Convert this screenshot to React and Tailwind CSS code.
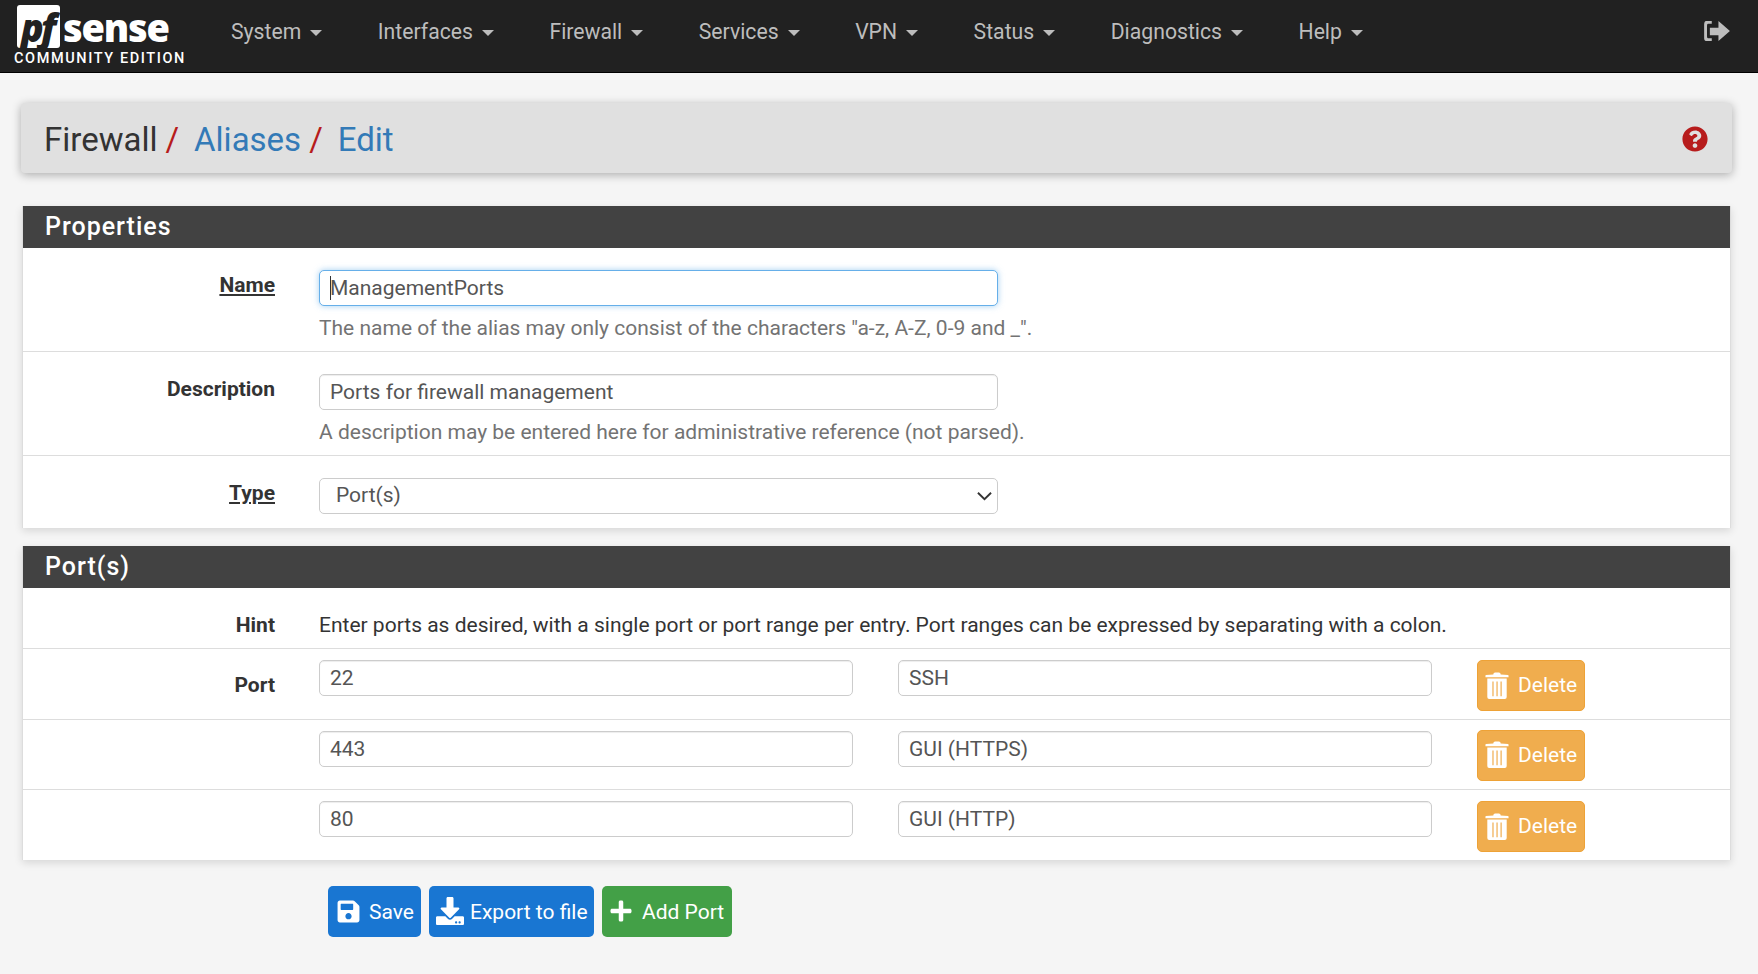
import React from 'react';
import { FaSave, FaDownload, FaPlus, FaQuestionCircle } from 'react-icons/fa';

const menus = ['System', 'Interfaces', 'Firewall', 'Services', 'VPN', 'Status', 'Diagnostics', 'Help'];

const ports = [
  { port: '22', desc: 'SSH', label: 'Port', btnGap: 'pt-[11px]', row: 'h-[70.500px] border-b border-[#ddd]' },
  { port: '443', desc: 'GUI (HTTPS)', label: '', btnGap: 'pt-[10px]', row: 'h-[70.500px] border-b border-[#ddd]' },
  { port: '80', desc: 'GUI (HTTP)', label: '', btnGap: 'pt-[11px]', row: 'h-[69.500px]' },
];

const TrashIcon = () => (
  <svg viewBox="0 0 26 30" className="w-[24px] h-[28px] shrink-0" fill="#fff">
    <path d="M9 2.500 Q9 0.500 11 0.500 L15 0.500 Q17 0.500 17 2.500 L25 3 Q25.500 3 25.500 3.500 L25.500 5.500 L0.500 5.500 L0.500 3.500 Q0.500 3 1 3 Z" />
    <path fillRule="evenodd" d="M2.500 7 L23.500 7 L23.500 27 Q23.500 29 21.500 29 L4.500 29 Q2.500 29 2.500 27 Z M8 10 L8 26 L9.300 26 L9.300 10 Z M12.400 10 L12.400 26 L13.700 26 L13.700 10 Z M16.800 10 L16.800 26 L18.100 26 L18.100 10 Z" />
  </svg>
);

const SignOutIcon = () => (
  <svg viewBox="0 0 28 22" className="w-[27px] h-[21px]" fill="#bdbdbd">
    <path d="M8 0 L2 0 Q0 0 0 4 L0 18 Q0 21 3 21 L8 21 L8 18 L4 18 Q3 18 3 16 L3 5 Q3 3 4 3 L8 3 Z" />
    <path d="M6 7 L15 7 L15 0 L27 10.500 L15 21 L15 15 L6 15 Z" />
  </svg>
);

const Logo = () => (
  <div className="w-[218px] pl-[14px] pt-[5px] shrink-0 self-start">
    <div className="flex items-center h-[43px] pl-[3px]">
      <div className="w-[43px] h-[43px] bg-white rounded-[3px] flex items-center justify-center">
        <span className="text-[#212121] text-[38px] leading-[40px] italic font-black tracking-[-3px] pr-[3px] font-['Open_Sans',sans-serif]">pf</span>
      </div>
      <span className="text-white text-[38px] leading-[38px] font-extrabold tracking-[-1.2px] ml-[3px] mt-[1px] font-['Open_Sans',sans-serif]">sense</span>
    </div>
    <div className="text-white text-[14.5px] leading-none tracking-[1.6px] font-medium mt-[4px] whitespace-nowrap">COMMUNITY EDITION</div>
  </div>
);

const SectionHead = ({ children }) => (
  <div className="h-[42px] bg-[#424242] flex items-center pl-[22px] pb-[1px] text-white text-[25px] font-medium tracking-[1px]">
    {children}
  </div>
);

const TextBox = ({ value, className = '' }) => (
  <input
    readOnly
    defaultValue={value}
    className={`h-[36px] bg-white border border-[#ccc] rounded-[5px] pl-[10px] text-[21px] text-[#555] outline-none shadow-[inset_0_1px_1px_rgba(0,0,0,0.075)] ${className}`}
  />
);

const FieldLabel = ({ children, underline }) => (
  <div className="w-[252px] shrink-0 pt-[3px] text-right text-[21px] font-bold text-[#333] leading-[24px]">
    <span className={underline ? 'underline underline-offset-2' : ''}>{children}</span>
  </div>
);

const Btn = ({ icon, children, className = '', textClass = 'pt-[3px]' }) => (
  <button className={`h-[51px] flex items-center rounded-[5px] text-white text-[21px] whitespace-nowrap ${className}`}>
    {icon}
    <span className={textClass}>{children}</span>
  </button>
);

export default function App() {
  return (
    <div className="min-h-screen bg-[#f5f5f5] font-['Roboto',sans-serif] text-[#333]">
      {/* Navbar */}
      <nav className="h-[73px] bg-[#212121] border-b border-black flex items-center pr-[27px]">
        <Logo />
        <div className="flex items-center flex-1 pl-[13px] pb-[8px]">
          {menus.map((m) => (
            <div key={m} className="flex items-center mr-[55.500px] text-[#bdbdbd] text-[21.2px]">
              <span>{m}</span>
              <span className="ml-[9px] mt-[2px] w-0 h-0 border-x-[6px] border-x-transparent border-t-[6px] border-t-[#bdbdbd]"></span>
            </div>
          ))}
        </div>
        <div className="pb-[9px]">
          <SignOutIcon />
        </div>
      </nav>

      <div className="pl-[22px] pr-[27px] pt-[30px] pb-[38px]">
        {/* Breadcrumb */}
        <div className="h-[70px] ml-[-1px] mr-[-1px] bg-[#e0e0e0] rounded-[4px] shadow-[0_2px_10px_rgba(0,0,0,0.3)] flex items-center justify-between pl-[23px] pr-[24px]">
          <div className="text-[33px] flex items-center pt-[3px]">
            <span className="text-[#333]">Firewall</span>
            <span className="text-[#b71c1c] ml-[8px]">/</span>
            <span className="text-[#337ab7] ml-[15px]">Aliases</span>
            <span className="text-[#b71c1c] ml-[8px]">/</span>
            <span className="text-[#337ab7] ml-[15px]">Edit</span>
          </div>
          <FaQuestionCircle className="text-[#b71c1c] w-[26px] h-[26px] mt-[1px]" />
        </div>

        {/* Properties */}
        <div className="mt-[33px] bg-white border-x border-[#ddd] shadow-[0_3px_8px_rgba(0,0,0,0.12)]">
          <SectionHead>Properties</SectionHead>
          <div className="flex h-[104px] pt-[22px] border-b border-[#ddd]">
            <FieldLabel underline>Name</FieldLabel>
            <div className="ml-[44px]">
              <div className="relative w-[679px]">
                <input
                  readOnly
                  defaultValue="ManagementPorts"
                  className="w-full h-[36px] bg-white border border-[#66afe9] rounded-[5px] pl-[10px] text-[21px] text-[#555] outline-none shadow-[0_0_6px_rgba(102,175,233,0.6)]"
                />
                <span className="absolute left-[11px] top-[6px] w-px h-[24px] bg-[#333]"></span>
              </div>
              <p className="mt-[10px] text-[21px] text-[#737373] leading-[24px]">The name of the alias may only consist of the characters "a-z, A-Z, 0-9 and _".</p>
            </div>
          </div>
          <div className="flex h-[104px] pt-[22px] border-b border-[#ddd]">
            <FieldLabel>Description</FieldLabel>
            <div className="ml-[44px]">
              <TextBox value="Ports for firewall management" className="w-[679px] block" />
              <p className="mt-[10px] text-[21px] text-[#737373] leading-[24px]">A description may be entered here for administrative reference (not parsed).</p>
            </div>
          </div>
          <div className="flex h-[72px] pt-[22px]">
            <FieldLabel underline>Type</FieldLabel>
            <div className="ml-[44px] relative">
              <select defaultValue="Port(s)" className="appearance-none block w-[679px] h-[36px] bg-white border border-[#ccc] rounded-[5px] pl-[16px] text-[21px] text-[#555] outline-none">
                <option>Port(s)</option>
              </select>
              <svg viewBox="0 0 16 10" className="absolute right-[6px] top-[13px] w-[15px] h-[10px] pointer-events-none" fill="none" stroke="#333" strokeWidth="2">
                <path d="M1 1.500 L8 8.500 L15 1.500" />
              </svg>
            </div>
          </div>
        </div>

        {/* Ports */}
        <div className="mt-[18px] bg-white border-x border-[#ddd] shadow-[0_3px_8px_rgba(0,0,0,0.12)]">
          <SectionHead>Port(s)</SectionHead>
          <div className="flex items-start h-[61px] pt-[22px] border-b border-[#ddd]">
            <FieldLabel>Hint</FieldLabel>
            <p className="ml-[44px] pt-[3px] text-[21px] text-[#333] leading-[24px]">Enter ports as desired, with a single port or port range per entry. Port ranges can be expressed by separating with a colon.</p>
          </div>
          {ports.map((p) => (
            <div key={p.port} className={`flex ${p.row}`}>
              <div className="pt-[21px]">
                <FieldLabel>{p.label}</FieldLabel>
              </div>
              <div className="ml-[44px] pt-[11px]">
                <TextBox value={p.port} className="w-[534px] block" />
              </div>
              <div className="ml-[45px] pt-[11px]">
                <TextBox value={p.desc} className="w-[534px] block" />
              </div>
              <div className={`ml-[45px] ${p.btnGap}`}>
                <Btn
                  icon={<span className="mr-[9px]"><TrashIcon /></span>}
                  className="w-[108px] pl-[7px] bg-[#f0ad4e] border border-[#eea236]"
                  textClass="pt-[1px]"
                >
                  Delete
                </Btn>
              </div>
            </div>
          ))}
        </div>

        {/* Actions */}
        <div className="mt-[26px] ml-[306px] flex gap-[8px]">
          <Btn icon={<FaSave className="w-[25px] h-[25px] mr-[8px]" />} className="w-[93px] pl-[8px] bg-[#1976d2]">Save</Btn>
          <Btn icon={<FaDownload className="w-[28px] h-[28px] mr-[6px]" />} className="w-[165px] pl-[7px] bg-[#1976d2]">Export to file</Btn>
          <Btn icon={<FaPlus className="w-[24px] h-[24px] mr-[9px]" />} className="w-[130px] pl-[7px] bg-[#43a047]">Add Port</Btn>
        </div>
      </div>
    </div>
  );
}
